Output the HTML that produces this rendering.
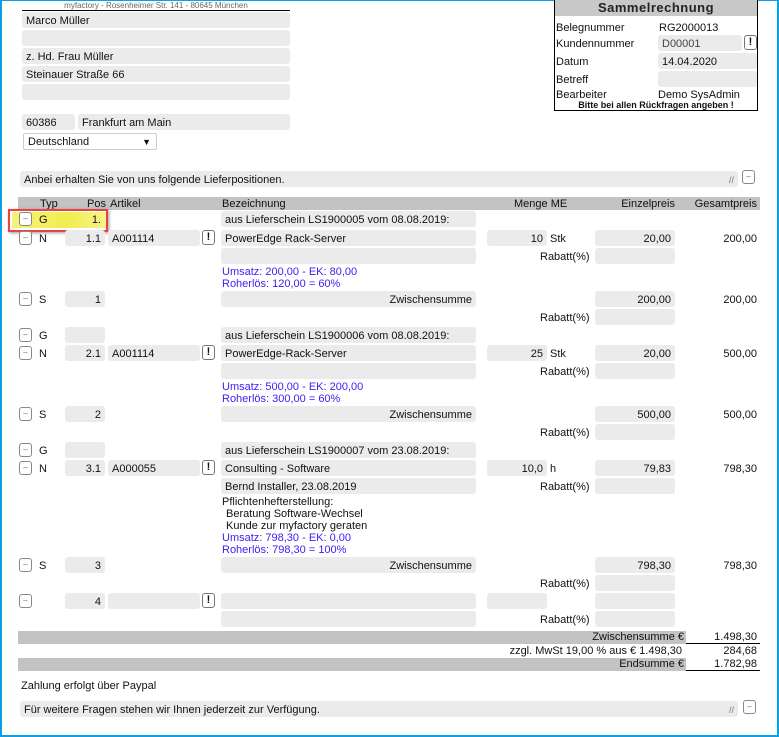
<!DOCTYPE html>
<html><head><meta charset="utf-8"><style>
*{box-sizing:border-box;margin:0;padding:0}
body{width:779px;height:737px;position:relative;background:#fff;font-family:"Liberation Sans",Arial,sans-serif;font-size:11px;color:#111;overflow:hidden}
.a{position:absolute;white-space:nowrap;padding-top:1px}
.f{position:absolute;background:#ebebeb;border-radius:3px;height:16px;line-height:18px;padding:0 4px;white-space:nowrap}
.r{text-align:right}
.b{position:absolute;width:13px;height:14px;border:1px solid #888;border-radius:3px;background:#fff;font-size:8px;line-height:12px;text-align:center;color:#666}
.x{position:absolute;width:13px;height:15px;border:1px solid #777;border-radius:3px;background:#fff;font-size:11px;font-weight:bold;line-height:13px;text-align:center}
.blue{color:#3d1cf2}
.gr{position:absolute;background:#c3c3c3}
</style></head><body>
<div class="a" style="left:0;top:0;width:779px;height:737px;border:2px solid #0aa0e3;border-top:1px solid #0aa0e3"></div>
<div class="a" style="left:22px;top:0;width:268px;text-align:center;font-size:8px;line-height:9px;color:#666">myfactory - Rosenheimer Str. 141 - 80645 München</div>
<div class="a" style="left:22px;top:10px;width:268px;height:1px;background:#000;padding:0"></div>
<div class="f" style="left:22px;top:12px;width:268px">Marco Müller</div>
<div class="f" style="left:22px;top:30px;width:268px"></div>
<div class="f" style="left:22px;top:48px;width:268px">z. Hd. Frau Müller</div>
<div class="f" style="left:22px;top:66px;width:268px">Steinauer Straße 66</div>
<div class="f" style="left:22px;top:84px;width:268px"></div>
<div class="f" style="left:22px;top:114px;width:53px">60386</div>
<div class="f" style="left:78px;top:114px;width:212px">Frankfurt am Main</div>
<div class="a" style="left:23px;top:133px;width:134px;height:17px;border:1px solid #ccc;border-radius:2px;padding-left:4px;line-height:15px">Deutschland<span style="position:absolute;right:5px;font-size:9px">▼</span></div>

<div class="a" style="left:554px;top:0;width:204px;height:111px;border:1px solid #000;border-top:none;padding:0"></div>
<div class="a" style="left:555px;top:0;width:202px;height:16px;background:#c8c8c8;text-align:center;font-weight:bold;font-size:13px;letter-spacing:0.5px;line-height:16px;color:#222;padding:0">Sammelrechnung</div>
<div class="a" style="left:556px;top:21px">Belegnummer</div><div class="a" style="left:659px;top:21px">RG2000013</div>
<div class="a" style="left:556px;top:37px">Kundennummer</div><div class="f" style="left:658px;top:35px;width:84px;color:#444">D00001</div><div class="x" style="left:744px;top:35px">!</div>
<div class="a" style="left:556px;top:55px">Datum</div><div class="f" style="left:658px;top:53px;width:99px">14.04.2020</div>
<div class="a" style="left:556px;top:73px">Betreff</div><div class="f" style="left:658px;top:71px;width:99px"></div>
<div class="a" style="left:556px;top:88px">Bearbeiter</div><div class="a" style="left:658px;top:88px">Demo SysAdmin</div>
<div class="a" style="left:555px;top:99px;width:202px;text-align:center;font-size:9px;font-weight:bold">Bitte bei allen Rückfragen angeben !</div>

<div class="f" style="left:20px;top:171px;width:718px">Anbei erhalten Sie von uns folgende Lieferpositionen.</div>
<div class="a" style="left:729px;top:174px;font-size:9px;color:#777">//</div>
<div class="b" style="left:742px;top:170px">–</div>

<div class="gr" style="left:18px;top:197px;width:742px;height:13px"></div>
<div class="a" style="left:40px;top:197px">Typ</div><div class="a" style="left:87px;top:197px">Pos</div><div class="a" style="left:110px;top:197px">Artikel</div><div class="a" style="left:222px;top:197px">Bezeichnung</div><div class="a" style="left:514px;top:197px">Menge ME</div><div class="a r" style="left:600px;top:197px;width:75px">Einzelpreis</div><div class="a r" style="left:677px;top:197px;width:80px">Gesamtpreis</div>

<div class="a" style="left:12px;top:212px;width:94px;height:16px;background:linear-gradient(90deg,#f4f27a,#f0ee50 60%,#f6f48a);padding:0"></div>
<div class="a" style="left:8px;top:209px;width:100px;height:23px;border:2px solid #e8443c;box-shadow:1px 1px 3px rgba(0,0,0,.4);padding:0"></div>

<div class="b" style="left:19px;top:212px">–</div><div class="a" style="left:39px;top:213px">G</div><div class="f r" style="left:65px;top:211px;width:40px;background:transparent">1.</div><div class="f" style="left:221px;top:211px;width:255px">aus Lieferschein LS1900005 vom 08.08.2019:</div>

<div class="b" style="left:19px;top:231px">–</div><div class="a" style="left:39px;top:232px">N</div><div class="f r" style="left:65px;top:230px;width:40px">1.1</div><div class="f" style="left:108px;top:230px;width:92px">A001114</div><div class="x" style="left:202px;top:230px">!</div><div class="f" style="left:221px;top:230px;width:255px">PowerEdge Rack-Server</div><div class="f r" style="left:487px;top:230px;width:60px">10</div><div class="a" style="left:550px;top:232px">Stk</div><div class="f r" style="left:595px;top:230px;width:80px">20,00</div><div class="a r" style="left:680px;top:232px;width:77px">200,00</div>
<div class="f" style="left:221px;top:248px;width:255px"></div><div class="a" style="left:540px;top:250px">Rabatt(%)</div><div class="f" style="left:595px;top:248px;width:80px"></div>
<div class="a blue" style="left:222px;top:265px">Umsatz: 200,00 - EK: 80,00</div><div class="a blue" style="left:222px;top:277px">Roherlös: 120,00 = 60%</div>

<div class="b" style="left:19px;top:292px">–</div><div class="a" style="left:39px;top:293px">S</div><div class="f r" style="left:65px;top:291px;width:40px">1</div><div class="f r" style="left:221px;top:291px;width:255px">Zwischensumme</div><div class="f r" style="left:595px;top:291px;width:80px">200,00</div><div class="a r" style="left:680px;top:293px;width:77px">200,00</div>
<div class="a" style="left:540px;top:311px">Rabatt(%)</div><div class="f" style="left:595px;top:309px;width:80px"></div>

<div class="b" style="left:19px;top:328px">–</div><div class="a" style="left:39px;top:329px">G</div><div class="f" style="left:65px;top:327px;width:40px"></div><div class="f" style="left:221px;top:327px;width:255px">aus Lieferschein LS1900006 vom 08.08.2019:</div>
<div class="b" style="left:19px;top:346px">–</div><div class="a" style="left:39px;top:347px">N</div><div class="f r" style="left:65px;top:345px;width:40px">2.1</div><div class="f" style="left:108px;top:345px;width:92px">A001114</div><div class="x" style="left:202px;top:345px">!</div><div class="f" style="left:221px;top:345px;width:255px">PowerEdge-Rack-Server</div><div class="f r" style="left:487px;top:345px;width:60px">25</div><div class="a" style="left:550px;top:347px">Stk</div><div class="f r" style="left:595px;top:345px;width:80px">20,00</div><div class="a r" style="left:680px;top:347px;width:77px">500,00</div>
<div class="f" style="left:221px;top:363px;width:255px"></div><div class="a" style="left:540px;top:365px">Rabatt(%)</div><div class="f" style="left:595px;top:363px;width:80px"></div>
<div class="a blue" style="left:222px;top:380px">Umsatz: 500,00 - EK: 200,00</div><div class="a blue" style="left:222px;top:392px">Roherlös: 300,00 = 60%</div>

<div class="b" style="left:19px;top:407px">–</div><div class="a" style="left:39px;top:408px">S</div><div class="f r" style="left:65px;top:406px;width:40px">2</div><div class="f r" style="left:221px;top:406px;width:255px">Zwischensumme</div><div class="f r" style="left:595px;top:406px;width:80px">500,00</div><div class="a r" style="left:680px;top:408px;width:77px">500,00</div>
<div class="a" style="left:540px;top:426px">Rabatt(%)</div><div class="f" style="left:595px;top:424px;width:80px"></div>

<div class="b" style="left:19px;top:443px">–</div><div class="a" style="left:39px;top:444px">G</div><div class="f" style="left:65px;top:442px;width:40px"></div><div class="f" style="left:221px;top:442px;width:255px">aus Lieferschein LS1900007 vom 23.08.2019:</div>
<div class="b" style="left:19px;top:461px">–</div><div class="a" style="left:39px;top:462px">N</div><div class="f r" style="left:65px;top:460px;width:40px">3.1</div><div class="f" style="left:108px;top:460px;width:92px">A000055</div><div class="x" style="left:202px;top:460px">!</div><div class="f" style="left:221px;top:460px;width:255px">Consulting - Software</div><div class="f r" style="left:487px;top:460px;width:60px">10,0</div><div class="a" style="left:550px;top:462px">h</div><div class="f r" style="left:595px;top:460px;width:80px">79,83</div><div class="a r" style="left:680px;top:462px;width:77px">798,30</div>
<div class="f" style="left:221px;top:478px;width:255px">Bernd Installer, 23.08.2019</div><div class="a" style="left:540px;top:480px">Rabatt(%)</div><div class="f" style="left:595px;top:478px;width:80px"></div>
<div class="a" style="left:222px;top:495px">Pflichtenhefterstellung:</div><div class="a" style="left:226px;top:507px">Beratung Software-Wechsel</div><div class="a" style="left:226px;top:519px">Kunde zur myfactory geraten</div>
<div class="a blue" style="left:222px;top:531px">Umsatz: 798,30 - EK: 0,00</div><div class="a blue" style="left:222px;top:543px">Roherlös: 798,30 = 100%</div>

<div class="b" style="left:19px;top:558px">–</div><div class="a" style="left:39px;top:559px">S</div><div class="f r" style="left:65px;top:557px;width:40px">3</div><div class="f r" style="left:221px;top:557px;width:255px">Zwischensumme</div><div class="f r" style="left:595px;top:557px;width:80px">798,30</div><div class="a r" style="left:680px;top:559px;width:77px">798,30</div>
<div class="a" style="left:540px;top:577px">Rabatt(%)</div><div class="f" style="left:595px;top:575px;width:80px"></div>

<div class="b" style="left:19px;top:594px">–</div><div class="f r" style="left:65px;top:593px;width:40px">4</div><div class="f" style="left:108px;top:593px;width:92px"></div><div class="x" style="left:202px;top:593px">!</div><div class="f" style="left:221px;top:593px;width:255px"></div><div class="f" style="left:487px;top:593px;width:60px"></div><div class="f" style="left:595px;top:593px;width:80px"></div>
<div class="f" style="left:221px;top:611px;width:255px"></div><div class="a" style="left:540px;top:613px">Rabatt(%)</div><div class="f" style="left:595px;top:611px;width:80px"></div>

<div class="gr" style="left:18px;top:631px;width:668px;height:13px"></div>
<div class="a r" style="left:400px;top:630px;width:284px">Zwischensumme €</div><div class="a r" style="left:688px;top:630px;width:69px">1.498,30</div>
<div class="a" style="left:686px;top:643px;width:74px;height:1px;background:#000;padding:0"></div>
<div class="a r" style="left:400px;top:644px;width:282px">zzgl. MwSt 19,00 % aus € 1.498,30</div><div class="a r" style="left:688px;top:644px;width:69px">284,68</div>
<div class="gr" style="left:18px;top:658px;width:668px;height:13px"></div>
<div class="a r" style="left:400px;top:657px;width:284px">Endsumme €</div><div class="a r" style="left:688px;top:657px;width:69px">1.782,98</div>
<div class="a" style="left:686px;top:670px;width:74px;height:1px;background:#000;padding:0"></div>

<div class="a" style="left:21px;top:679px">Zahlung erfolgt über Paypal</div>
<div class="f" style="left:20px;top:701px;width:718px">Für weitere Fragen stehen wir Ihnen jederzeit zur Verfügung.</div>
<div class="a" style="left:729px;top:704px;font-size:9px;color:#777">//</div>
<div class="b" style="left:743px;top:700px">–</div>
</body></html>
